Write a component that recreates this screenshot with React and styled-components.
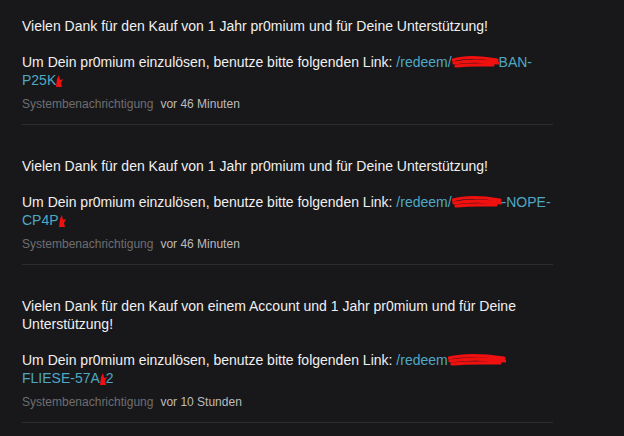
import React from 'react';
import styled, { createGlobalStyle } from 'styled-components';

const GlobalStyle = createGlobalStyle`
    html, body {
        margin: 0;
        background: #18181b;
    }
    body {
        font-family: "Liberation Sans", Arial, sans-serif;
    }
`;

const notifications = [
    {
        title: 'Vielen Dank für den Kauf von 1 Jahr pr0mium und für Deine Unterstützung!',
        before: '/redeem/',
        blot: 47,
        after: 'BAN-',
        next: 'P25K',
        source: 'Systembenachrichtigung',
        time: 'vor 46 Minuten',
    },
    {
        title: 'Vielen Dank für den Kauf von 1 Jahr pr0mium und für Deine Unterstützung!',
        before: '/redeem/',
        blot: 50,
        after: '-NOPE-',
        next: 'CP4P',
        source: 'Systembenachrichtigung',
        time: 'vor 46 Minuten',
    },
    {
        title: 'Vielen Dank für den Kauf von einem Account und 1 Jahr pr0mium und für Deine Unterstützung!',
        before: '/redeem',
        blot: 58,
        after: '',
        next: 'FLIESE-57A',
        end: '2',
        source: 'Systembenachrichtigung',
        time: 'vor 10 Stunden',
    },
];

function Scribble({ width }) {
    return (
        <Blot width={width}>
            <svg width={width} height="14" viewBox={`0 0 ${width} 14`}>
                <path
                    d={`M1 5 C ${width * 0.3} 1, ${width * 0.6} 2, ${width - 2} 5 M2 8 C ${width * 0.35} 5, ${width * 0.7} 6, ${width - 1} 8 M4 11 C ${width * 0.4} 9, ${width * 0.7} 10, ${width - 6} 10`}
                    stroke="#f01010"
                    strokeWidth="3.2"
                    fill="none"
                    strokeLinecap="round"
                />
            </svg>
        </Blot>
    );
}

function Mark() {
    return (
        <MarkBox>
            <svg width="10" height="16" viewBox="0 0 10 16">
                <path d="M2 14 L3 6 L5 2 L6 7 L9 6 L7 10 L8 14 Z" fill="#f01010" />
            </svg>
        </MarkBox>
    );
}

export default function App() {
    return (
        <>
            <GlobalStyle />
            <List>
                {notifications.map((n, i) => (
                    <Item key={i}>
                        <Message>
                            <div>{n.title}</div>
                            <div>
                                Um Dein pr0mium einzulösen, benutze bitte folgenden Link:{' '}
                                <Link>
                                    {n.before}
                                    <Scribble width={n.blot} />
                                    {n.after}
                                    <br />
                                    {n.next}
                                    <Mark />
                                    {n.end}
                                </Link>
                            </div>
                        </Message>
                        <Meta>
                            <Source>{n.source}</Source>
                            <Time>{n.time}</Time>
                        </Meta>
                    </Item>
                ))}
            </List>
        </>
    );
}

const List = styled.div`
    display: flex;
    flex-direction: column;
    gap: 32px;
    padding: 17px 0 0 22px;
    width: 531px;
`;

const Item = styled.div`
    padding-bottom: 11px;
    border-bottom: 1px solid #2c2c2f;
`;

const Message = styled.div`
    display: flex;
    flex-direction: column;
    gap: 18px;
    color: #f0f0f0;
    font-size: 14px;
    line-height: 18px;
`;

const Link = styled.a`
    color: #4ea8c4;
    text-decoration: none;
`;

const Blot = styled.span`
    display: inline-block;
    width: ${p => p.width}px;
    height: 14px;
    vertical-align: -2px;
    svg { display: block; }
`;

const MarkBox = styled.span`
    display: inline-block;
    width: 8px;
    height: 16px;
    vertical-align: -4px;
    margin-left: -2px;
    svg { display: block; }
`;

const Meta = styled.div`
    display: flex;
    gap: 7px;
    margin-top: 6px;
    font-size: 12px;
    line-height: 18px;
`;

const Source = styled.span`
    color: #6e6e70;
`;

const Time = styled.span`
    color: #bcbcbc;
`;
